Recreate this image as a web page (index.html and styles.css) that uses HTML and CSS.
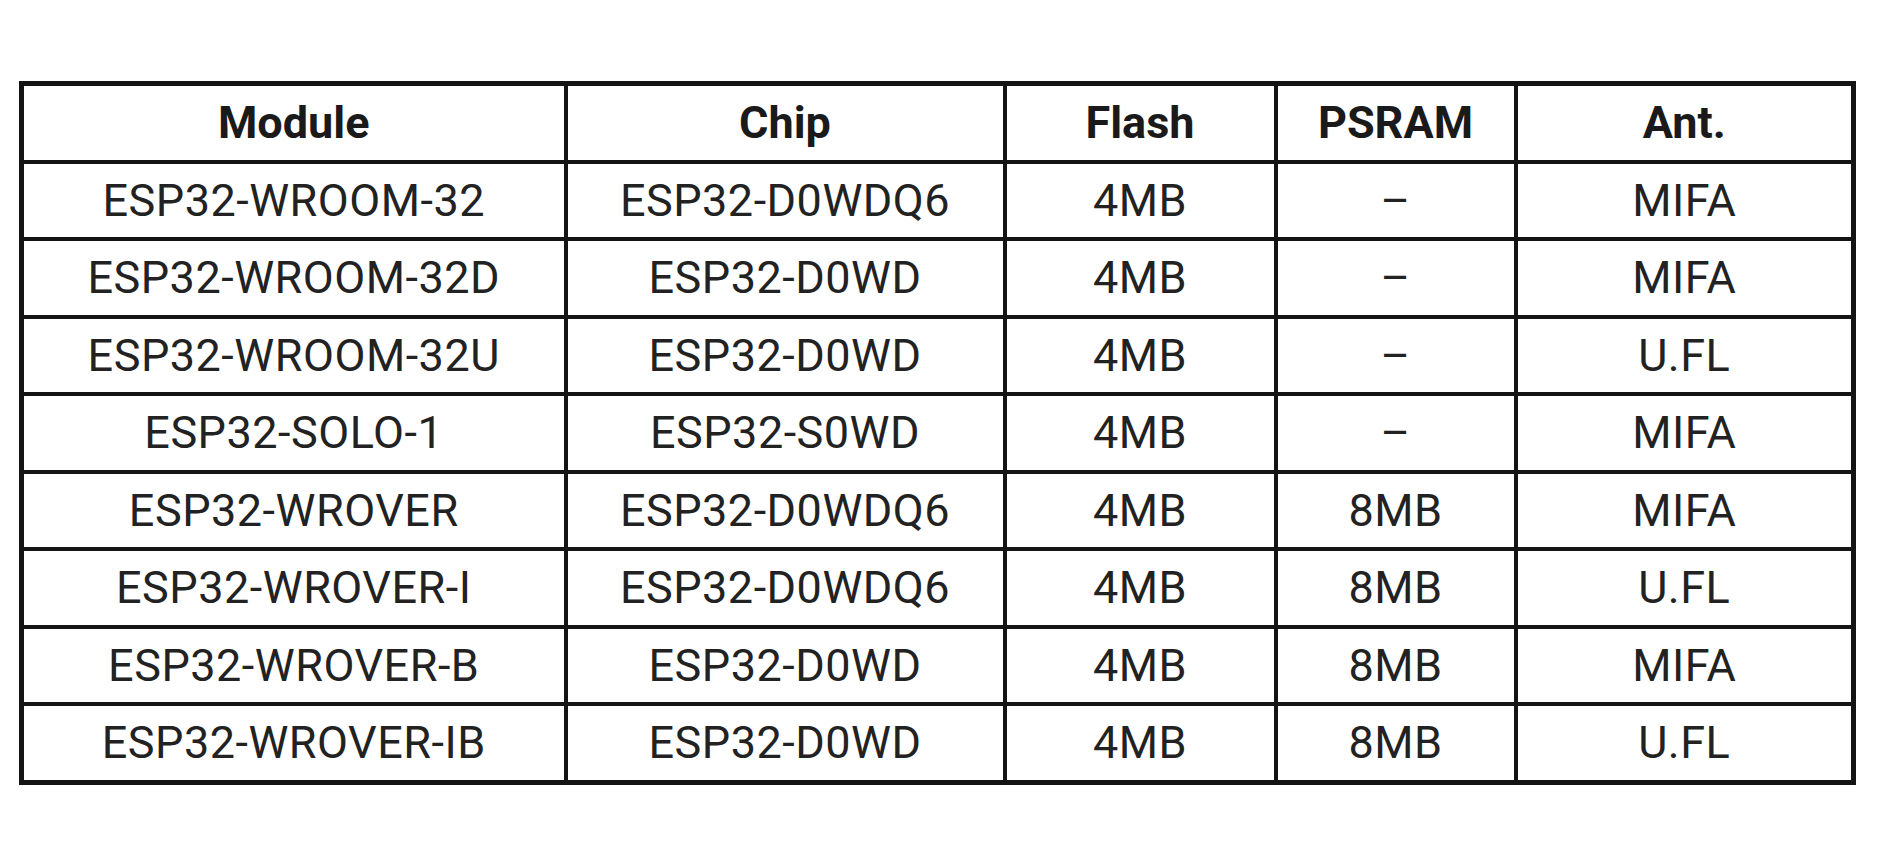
FILE: index.html
```html
<!DOCTYPE html>
<html lang="en">
<head>
<meta charset="utf-8">
<title>ESP32 modules</title>
<link rel="stylesheet" href="styles.css">
</head>
<body>
<table class="modules">
  <colgroup>
    <col class="c-module">
    <col class="c-chip">
    <col class="c-flash">
    <col class="c-psram">
    <col class="c-ant">
  </colgroup>
  <thead>
    <tr><th>Module</th><th>Chip</th><th>Flash</th><th>PSRAM</th><th>Ant.</th></tr>
  </thead>
  <tbody>
    <tr><td>ESP32-WROOM-32</td><td>ESP32-D0WDQ6</td><td>4MB</td><td>–</td><td>MIFA</td></tr>
    <tr><td>ESP32-WROOM-32D</td><td>ESP32-D0WD</td><td>4MB</td><td>–</td><td>MIFA</td></tr>
    <tr><td>ESP32-WROOM-32U</td><td>ESP32-D0WD</td><td>4MB</td><td>–</td><td>U.FL</td></tr>
    <tr><td>ESP32-SOLO-1</td><td>ESP32-S0WD</td><td>4MB</td><td>–</td><td>MIFA</td></tr>
    <tr><td>ESP32-WROVER</td><td>ESP32-D0WDQ6</td><td>4MB</td><td>8MB</td><td>MIFA</td></tr>
    <tr><td>ESP32-WROVER-I</td><td>ESP32-D0WDQ6</td><td>4MB</td><td>8MB</td><td>U.FL</td></tr>
    <tr><td>ESP32-WROVER-B</td><td>ESP32-D0WD</td><td>4MB</td><td>8MB</td><td>MIFA</td></tr>
    <tr><td>ESP32-WROVER-IB</td><td>ESP32-D0WD</td><td>4MB</td><td>8MB</td><td>U.FL</td></tr>
  </tbody>
</table>
</body>
</html>
```

FILE: styles.css
```css
html, body {
  margin: 0;
  padding: 0;
  background: #ffffff;
}

body {
  padding: 81px 0 0 19px;
  font-family: Roboto, "Liberation Sans", Arial, sans-serif;
  color: #222222;
}

.modules {
  border-collapse: collapse;
  table-layout: fixed;
  width: 1837px;
  border: 5px solid #141414;
}

.c-module { width: 544px; }
.c-chip { width: 439px; }
.c-flash { width: 271px; }
.c-psram { width: 240px; }
.c-ant { width: 338px; }

.modules th,
.modules td {
  border: 4px solid #141414;
  height: 73.5px;
  padding: 0;
  text-align: center;
  vertical-align: middle;
  font-size: 45px;
  letter-spacing: 0.5px;
  line-height: 1;
}

.modules th {
  font-weight: 700;
  color: #1a1a1a;
  letter-spacing: 0;
}

.modules td {
  font-weight: 400;
}
```
